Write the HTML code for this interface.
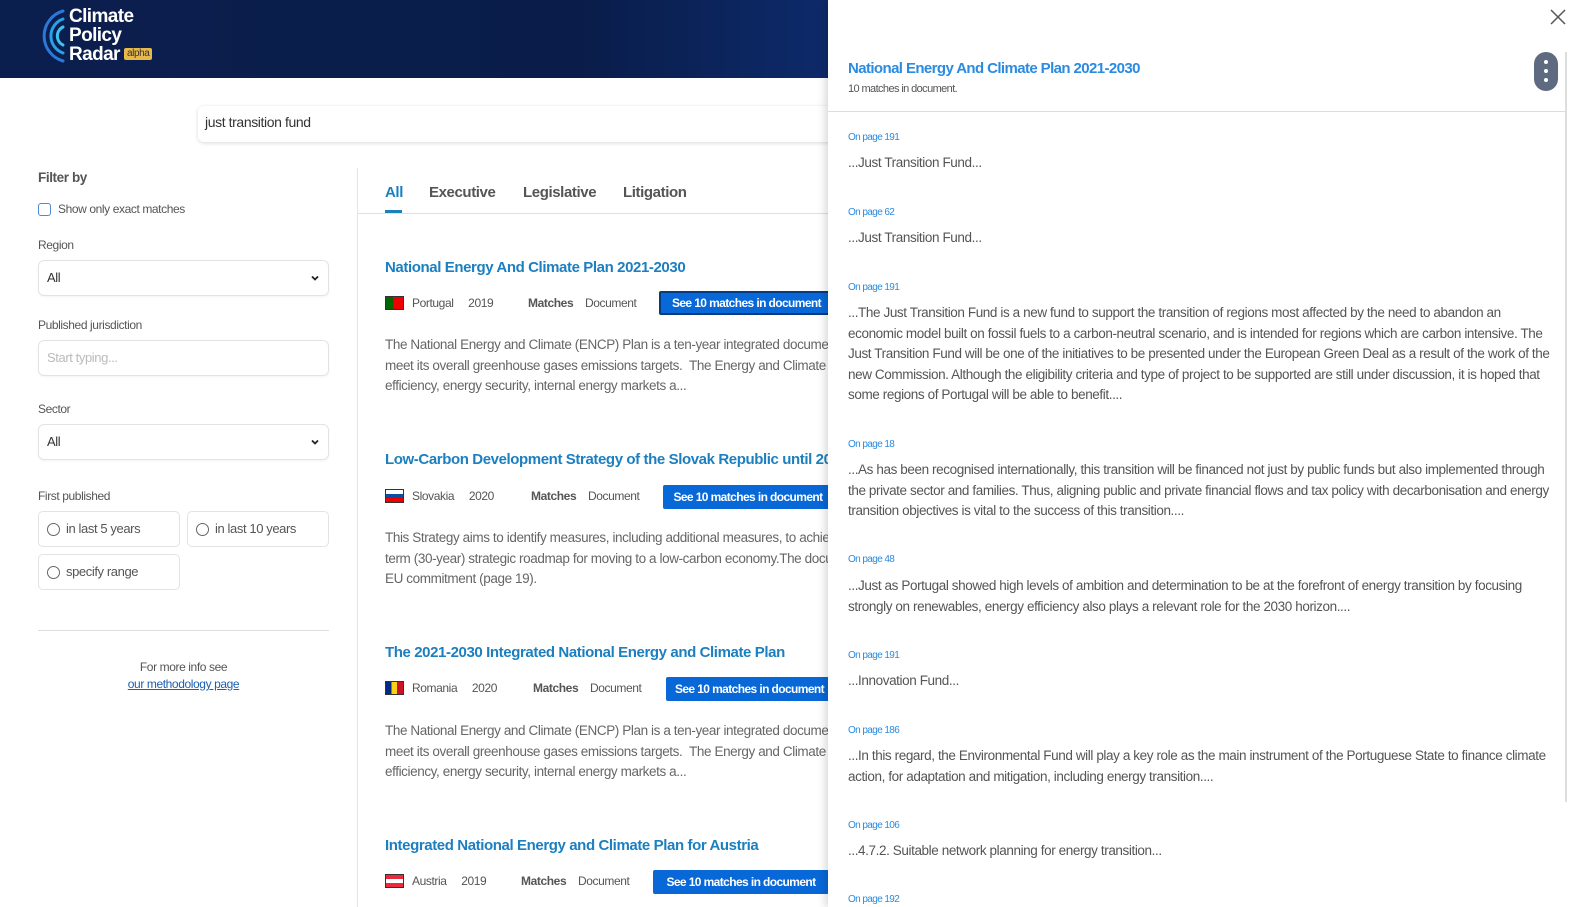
<!DOCTYPE html>
<html><head><meta charset="utf-8"><style>
*{margin:0;padding:0;box-sizing:border-box}
body{width:1573px;height:907px;overflow:hidden;background:#fff;font-family:"Liberation Sans",sans-serif;letter-spacing:-0.4px;position:relative;color:#555}
.a{position:absolute;white-space:nowrap}
.hdr{position:absolute;left:0;top:0;width:828px;height:78px;background:linear-gradient(90deg,#0b1f4e,#0a1d4a 70%,#0d2a6a)}
.lbl{font-size:12px;color:#555}
.box{position:absolute;left:38px;width:291px;height:36px;border:1px solid #e3e3e3;border-radius:6px;box-shadow:0 1px 2px rgba(0,0,0,.05)}
.box span{position:absolute;left:8px;top:9px;font-size:13px;color:#333}
.chev{position:absolute;right:8px;top:12px;width:10px;height:10px}
.rad{position:absolute;height:36px;border:1px solid #e3e3e3;border-radius:5px;font-size:13px;color:#555}
.rad i{position:absolute;left:8px;top:11px;width:13px;height:13px;border:1px solid #666;border-radius:50%}
.rad span{position:absolute;left:27px;top:9px}
.t{font-size:15px;font-weight:bold;color:#1c7fc0}
.meta{font-size:12px;color:#555}
.btn{position:absolute;height:24px;background:#0868d8;color:#fff;font-size:12px;font-weight:bold;padding:5px 0 0;text-align:center;border-radius:2px;letter-spacing:-0.6px}
.desc{font-size:13.5px;line-height:20.5px;color:#666;width:445px;overflow:hidden}
.flag{position:absolute;width:19px;height:14px;border:1px solid #333}
.panel{position:absolute;left:828px;top:0;width:745px;height:907px;background:#fff;box-shadow:-3px 0 8px rgba(0,0,0,.15)}
.pg{font-size:10px;color:#2a8be0;letter-spacing:-0.6px}
.mt{font-size:13.5px;line-height:20.5px;color:#555;width:705px;white-space:normal}
</style></head><body>
<div class="hdr"></div>
<svg class="a" style="left:36px;top:8px" width="30" height="56" viewBox="0 0 30 56">
<g fill="none" stroke-linecap="round">
<path d="M27 3 A26 26 0 0 0 27 53" stroke="#2a78d8" stroke-width="3"/>
<path d="M27 11 A18 18 0 0 0 27 45" stroke="#2aa0e8" stroke-width="3"/>
<path d="M27 19 A10 10 0 0 0 27 37" stroke="#40c0f0" stroke-width="3"/>
</g></svg>
<div class="a" style="left:69px;top:7px;color:#fff;font-weight:bold;font-size:19px;line-height:19px;letter-spacing:-0.6px">Climate<br>Policy<br>Radar</div>
<div class="a" style="left:124px;top:48px;background:#e8b84a;color:#333;font-size:10px;padding:0 3px;border-radius:2px;line-height:12px">alpha</div>

<div class="a" style="left:198px;top:106px;width:640px;height:36px;border-radius:6px;box-shadow:0 1px 4px rgba(0,0,0,.15);"></div>
<div class="a" style="left:205px;top:114px;font-size:14px;color:#333">just transition fund</div>

<div class="a" style="left:38px;top:170px;font-size:13.5px;font-weight:bold;color:#555">Filter by</div>
<div class="a" style="left:38px;top:203px;width:13px;height:13px;border:1px solid #4a8ad8;border-radius:3px"></div>
<div class="a lbl" style="left:58px;top:202px">Show only exact matches</div>
<div class="a lbl" style="left:38px;top:238px">Region</div>
<div class="box" style="top:260px"><span>All</span><svg class="chev" viewBox="0 0 10 10"><path d="M2 3.5l3 3 3-3" stroke="#222" stroke-width="1.8" fill="none"/></svg></div>
<div class="a lbl" style="left:38px;top:318px">Published jurisdiction</div>
<div class="box" style="top:340px"><span style="color:#bbb">Start typing...</span></div>
<div class="a lbl" style="left:38px;top:402px">Sector</div>
<div class="box" style="top:424px"><span>All</span><svg class="chev" viewBox="0 0 10 10"><path d="M2 3.5l3 3 3-3" stroke="#222" stroke-width="1.8" fill="none"/></svg></div>
<div class="a lbl" style="left:38px;top:489px">First published</div>
<div class="rad" style="left:38px;top:511px;width:142px"><i></i><span>in last 5 years</span></div>
<div class="rad" style="left:187px;top:511px;width:142px"><i></i><span>in last 10 years</span></div>
<div class="rad" style="left:38px;top:554px;width:142px"><i></i><span>specify range</span></div>
<div class="a" style="left:38px;top:630px;width:291px;height:1px;background:#ddd"></div>
<div class="a lbl" style="left:0;width:367px;text-align:center;top:660px">For more info see</div>
<div class="a lbl" style="left:0;width:367px;text-align:center;top:677px;color:#1c5fb0;text-decoration:underline">our methodology page</div>

<div class="a" style="left:357px;top:168px;width:1px;height:739px;background:#e5e5e5"></div>
<div class="a" style="left:358px;top:213px;width:470px;height:1px;background:#e0e0e0"></div>
<div class="a" style="left:385px;top:184px;font-size:15px;font-weight:bold;color:#1c7fc0">All</div>
<div class="a" style="left:385px;top:210px;width:17px;height:3px;background:#1c7fc0"></div>
<div class="a" style="left:429px;top:184px;font-size:15px;font-weight:bold;color:#555">Executive</div>
<div class="a" style="left:523px;top:184px;font-size:15px;font-weight:bold;color:#555">Legislative</div>
<div class="a" style="left:623px;top:184px;font-size:15px;font-weight:bold;color:#555">Litigation</div>

<!-- results -->
<div class="a t" style="left:385px;top:259px">National Energy And Climate Plan 2021-2030</div>
<div class="flag" style="left:385px;top:296px;background:linear-gradient(90deg,#060 40%,#e00 40%)"></div>
<div class="a meta" style="left:412px;top:296px">Portugal &nbsp;&nbsp;&nbsp; 2019</div>
<div class="a meta" style="left:528px;top:296px"><b>Matches</b> &nbsp;&nbsp; Document</div>
<div class="btn" style="left:659px;top:291px;width:175px;border:2px solid #063b80;padding-top:3px">See 10 matches in document</div>
<div class="a desc" style="left:385px;top:335px">The National Energy and Climate (ENCP) Plan is a ten-year integrated document<br>meet its overall greenhouse gases emissions targets. &nbsp;The Energy and Climate<br>efficiency, energy security, internal energy markets a...</div>

<div class="a t" style="left:385px;top:451px">Low-Carbon Development Strategy of the Slovak Republic until 2030</div>
<div class="flag" style="left:385px;top:489px;background:linear-gradient(#fff 33%,#0b4ea2 33% 66%,#e00 66%)"></div>
<div class="a meta" style="left:412px;top:489px">Slovakia &nbsp;&nbsp;&nbsp; 2020</div>
<div class="a meta" style="left:531px;top:489px"><b>Matches</b> &nbsp;&nbsp; Document</div>
<div class="btn" style="left:663px;top:485px;width:170px">See 10 matches in document</div>
<div class="a desc" style="left:385px;top:528px">This Strategy aims to identify measures, including additional measures, to achieve<br>term (30-year) strategic roadmap for moving to a low-carbon economy.The docu<br>EU commitment (page 19).</div>

<div class="a t" style="left:385px;top:644px">The 2021-2030 Integrated National Energy and Climate Plan</div>
<div class="flag" style="left:385px;top:681px;background:linear-gradient(90deg,#002b7f 33%,#fcd116 33% 66%,#ce1126 66%)"></div>
<div class="a meta" style="left:412px;top:681px">Romania &nbsp;&nbsp;&nbsp; 2020</div>
<div class="a meta" style="left:533px;top:681px"><b>Matches</b> &nbsp;&nbsp; Document</div>
<div class="btn" style="left:666px;top:677px;width:167px">See 10 matches in document</div>
<div class="a desc" style="left:385px;top:721px">The National Energy and Climate (ENCP) Plan is a ten-year integrated document<br>meet its overall greenhouse gases emissions targets. &nbsp;The Energy and Climate<br>efficiency, energy security, internal energy markets a...</div>

<div class="a t" style="left:385px;top:837px">Integrated National Energy and Climate Plan for Austria</div>
<div class="flag" style="left:385px;top:874px;background:linear-gradient(#ed2939 33%,#fff 33% 66%,#ed2939 66%)"></div>
<div class="a meta" style="left:412px;top:874px">Austria &nbsp;&nbsp;&nbsp; 2019</div>
<div class="a meta" style="left:521px;top:874px"><b>Matches</b> &nbsp;&nbsp; Document</div>
<div class="btn" style="left:653px;top:870px;width:176px">See 10 matches in document</div>

<div class="panel">
<svg class="a" style="left:722px;top:9px" width="16" height="16" viewBox="0 0 16 16"><path d="M1 1L15 15M15 1L1 15" stroke="#555" stroke-width="1.5"/></svg>
<div class="a" style="left:706px;top:52px;width:24px;height:39px;background:#5d6a80;border-radius:12px"></div>
<div class="a" style="left:716px;top:60px;width:4px;height:4px;background:#fff;border-radius:50%"></div>
<div class="a" style="left:716px;top:69px;width:4px;height:4px;background:#fff;border-radius:50%"></div>
<div class="a" style="left:716px;top:78px;width:4px;height:4px;background:#fff;border-radius:50%"></div>
<div class="a" style="left:737px;top:52px;width:2px;height:750px;background:#ddd"></div>
<div class="a" style="left:20px;top:60px;font-size:15px;font-weight:bold;color:#2a8be0;letter-spacing:-0.6px">National Energy And Climate Plan 2021-2030</div>
<div class="a" style="left:20px;top:83px;font-size:11px;color:#555;letter-spacing:-0.6px">10 matches in document.</div>
<div class="a" style="left:0;top:111px;width:737px;height:1px;background:#d5dfe8"></div>

<div class="a pg" style="left:20px;top:132px">On page 191</div>
<div class="a mt" style="left:20px;top:153px">...Just Transition Fund...</div>
<div class="a pg" style="left:20px;top:207px">On page 62</div>
<div class="a mt" style="left:20px;top:228px">...Just Transition Fund...</div>
<div class="a pg" style="left:20px;top:282px">On page 191</div>
<div class="a mt" style="left:20px;top:303px">...The Just Transition Fund is a new fund to support the transition of regions most affected by the need to abandon an economic model built on fossil fuels to a carbon-neutral scenario, and is intended for regions which are carbon intensive. The Just Transition Fund will be one of the initiatives to be presented under the European Green Deal as a result of the work of the new Commission. Although the eligibility criteria and type of project to be supported are still under discussion, it is hoped that some regions of Portugal will be able to benefit....</div>
<div class="a pg" style="left:20px;top:439px">On page 18</div>
<div class="a mt" style="left:20px;top:460px">...As has been recognised internationally, this transition will be financed not just by public funds but also implemented through the private sector and families. Thus, aligning public and private financial flows and tax policy with decarbonisation and energy transition objectives is vital to the success of this transition....</div>
<div class="a pg" style="left:20px;top:554px">On page 48</div>
<div class="a mt" style="left:20px;top:576px">...Just as Portugal showed high levels of ambition and determination to be at the forefront of energy transition by focusing strongly on renewables, energy efficiency also plays a relevant role for the 2030 horizon....</div>
<div class="a pg" style="left:20px;top:650px">On page 191</div>
<div class="a mt" style="left:20px;top:671px">...Innovation Fund...</div>
<div class="a pg" style="left:20px;top:725px">On page 186</div>
<div class="a mt" style="left:20px;top:746px">...In this regard, the Environmental Fund will play a key role as the main instrument of the Portuguese State to finance climate action, for adaptation and mitigation, including energy transition....</div>
<div class="a pg" style="left:20px;top:820px">On page 106</div>
<div class="a mt" style="left:20px;top:841px">...4.7.2. Suitable network planning for energy transition...</div>
<div class="a pg" style="left:20px;top:894px">On page 192</div>
</div>
</body></html>
